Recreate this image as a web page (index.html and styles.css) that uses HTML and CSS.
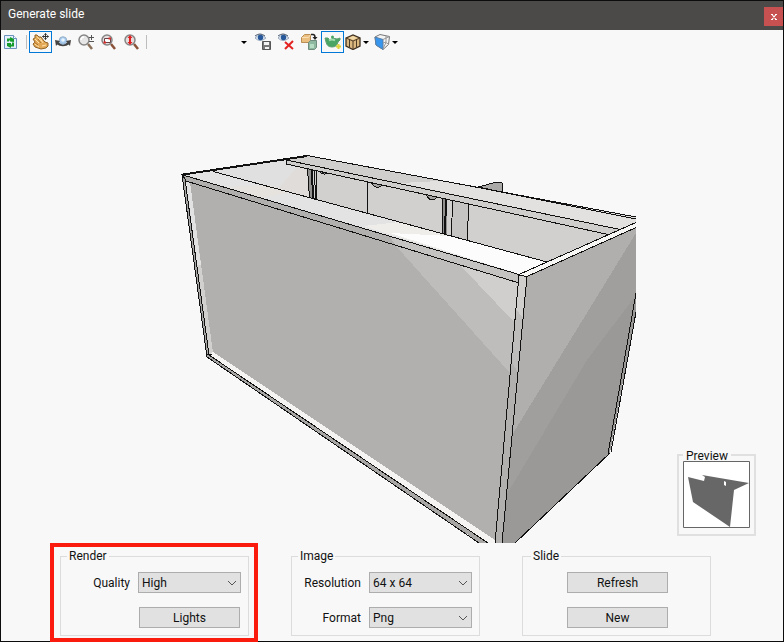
FILE: index.html
```html
<!DOCTYPE html>
<html lang="en">
<head>
  <meta charset="UTF-8">
  <title>Generate slide</title>
  <link rel="stylesheet" href="styles.css">
</head>
<body>

  <div class="window">
    <!-- Title bar -->
    <header class="titlebar">
      <span>Generate slide</span>
      <button class="close-btn" aria-label="Close">
        <svg width="6" height="6" viewBox="0 0 6 6"><path d="M1 0.5L5 5.5M5 0.5L1 5.5M0 0.5h2M4 0.5h2M0 5.5h2M4 5.5h2" stroke="#fff" stroke-width="1.2"/></svg>
      </button>
    </header>

    <!-- Toolbar -->
    <div class="toolbar">
      <button class="tool" aria-label="Refresh view">
        <svg width="14" height="16" viewBox="0 0 14 16">
          <path d="M0.500 1.500h9l3 3v10h-12z" fill="#e4f0fb" stroke="#6b93bd"/>
          <path d="M9.500 1.500v3h3" fill="#fff" stroke="#6b93bd"/>
          <path d="M4 7.500V5.500h3M9 8.500v3H6" fill="none" stroke="#159a2c" stroke-width="2"/>
          <path d="M6 3l4 2v3L6 7.500zM7 9l-4 0v3l4 2z" fill="#159a2c"/>
        </svg>
      </button>
      <span class="separator"></span>
      <button class="tool active" aria-label="Pan">
        <svg width="18" height="18" viewBox="0 0 18 18">
          <path d="M1 11L3 9 1 6 3 5 3 2 5 2 7 4 9 4 12 8 13 9 16 10 16 13 14 15 9 16 6 15 3 14z" fill="#e3a856" stroke="#8f6428"/>
          <path d="M3 6l4 4M5 3.500l4 5M8 5l3 5M3 11l4 3M10 13l4-1" stroke="#ffe2ae" fill="none"/>
          <path d="M2 9l4 3M6 6l3 4" stroke="#a8702a" fill="none"/>
          <path d="M13.500 0.500v6M10.500 3.500h6" stroke="#333" fill="none"/>
          <path d="M12 2l1.500-2L15 2zM12 5l1.500 2L15 5zM12 2l-2 1.500L12 5zM15 2l2 1.500L15 5z" fill="#333"/>
        </svg>
      </button>
      <button class="tool" aria-label="Orbit">
        <svg width="16" height="16" viewBox="0 0 16 16">
          <path d="M2 9q6 4 12 0" stroke="#444" stroke-width="2.500" fill="none"/>
          <circle cx="8" cy="6.500" r="3.800" fill="#a3c9ee" stroke="#9ab0c8"/>
          <circle cx="8" cy="6" r="1.800" fill="#e9f4fd"/>
          <path d="M0 6l5 1-4 5zM16 6l-5 1 4 5z" fill="#444"/>
        </svg>
      </button>
      <button class="tool" aria-label="Zoom in and out">
        <svg width="16" height="16" viewBox="0 0 16 16">
          <path d="M10 10l4 5" stroke="#8a7058" stroke-width="2.500"/>
          <circle cx="6" cy="6" r="5" fill="#e6e6e6" stroke="#858585" stroke-width="1.500"/>
          <path d="M3 6q0-3 3-3" stroke="#fff" stroke-width="1.500" fill="none"/>
          <path d="M11 3.500h5M13.500 1v5M11 7.500h5" stroke="#555"/>
        </svg>
      </button>
      <button class="tool" aria-label="Zoom window">
        <svg width="16" height="16" viewBox="0 0 16 16">
          <path d="M10 10l4 5" stroke="#8a5238" stroke-width="2.500"/>
          <circle cx="6" cy="6" r="5" fill="#e8e0e0" stroke="#858585" stroke-width="1.500"/>
          <path d="M3.500 4.500h6v4h-6z" fill="#fff" stroke="#6a4444"/>
          <path d="M2.500 8.500h2.500M7.500 4.500h2.500" stroke="#dd2a2a" stroke-width="2"/>
        </svg>
      </button>
      <button class="tool" aria-label="Zoom extents">
        <svg width="16" height="16" viewBox="0 0 16 16">
          <path d="M10 10l4 5" stroke="#8a5238" stroke-width="2.500"/>
          <circle cx="6" cy="6" r="5" fill="#e6dcdc" stroke="#858585" stroke-width="1.500"/>
          <path d="M6 3v6" stroke="#e02020" stroke-width="2"/>
          <path d="M3.500 4L6 1l2.500 3zM3.500 8L6 11l2.500-3z" fill="#e02020"/>
        </svg>
      </button>
      <span class="separator"></span>
      <button class="view-list" aria-label="Views">
        <svg width="6" height="3" viewBox="0 0 6 3"><path d="M0 0h6L3 3z" fill="#000"/></svg>
      </button>
      <button class="tool" aria-label="Save view">
        <svg width="18" height="18" viewBox="0 0 18 18">
          <path d="M0 5q5-6 11 0-6 5-11 0z" fill="#dce7f3" stroke="#9aa9bd"/>
          <circle cx="5.500" cy="4.500" r="2.700" fill="#27589a"/>
          <path d="M0 3q5-4 10 0" fill="none" stroke="#46566d"/>
          <path d="M7.500 8.500h8v8h-8z" fill="#777" stroke="#555"/>
          <path d="M9 9h5v3H9zM10 14h4v2h-4z" fill="#f2f2f2"/>
        </svg>
      </button>
      <button class="tool" aria-label="Delete view">
        <svg width="18" height="18" viewBox="0 0 18 18">
          <path d="M0 5q5-6 11 0-6 5-11 0z" fill="#dce7f3" stroke="#9aa9bd"/>
          <circle cx="5.500" cy="4.500" r="2.700" fill="#27589a"/>
          <path d="M0 3q5-4 10 0" fill="none" stroke="#46566d"/>
          <path d="M7 9l8 7M15 8l-8 8" stroke="#e32222" stroke-width="2"/>
        </svg>
      </button>
      <button class="tool" aria-label="Swap objects">
        <svg width="18" height="18" viewBox="0 0 18 18">
          <path d="M0.500 4.500l3-3h6v6l-2 2h-7z" fill="#eabf80" stroke="#b98d55"/>
          <path d="M1 4.500h6.500l2-3" fill="none" stroke="#f8dfb5"/>
          <path d="M7.500 9.500l2-2h6v7l-2 2h-6z" fill="#8fb8a0" stroke="#6f8c7c"/>
          <path d="M9 11h4v4H9z" fill="#b7dcc4"/>
          <path d="M10 1.500h2q2 0 2 3" fill="none" stroke="#222" stroke-width="1.500"/>
          <path d="M11.500 4h5L14 7z" fill="#222"/>
        </svg>
      </button>
      <button class="tool active" aria-label="Render">
        <svg width="18" height="18" viewBox="0 0 18 18">
          <path d="M1 5l3 0 2 2q3-3 7-1l3-1 0 2-2 2q-1 5-6 5-5 0-6-5z" fill="#48a563" stroke="#5f9f72"/>
          <path d="M5 7.500q3-2 6 0" stroke="#a5dcb2" stroke-width="2" fill="none"/>
          <circle cx="8.500" cy="4" r="1.500" fill="#48a563"/>
          <path d="M14.500 11v5M12 13.500h5" stroke="#dcd53c" stroke-width="2"/>
        </svg>
      </button>
      <button class="tool drop" aria-label="Materials">
        <svg width="16" height="16" viewBox="0 0 16 16">
          <path d="M1 4l7-3 7 3v8l-7 3.500L1 12z" fill="#dbb880" stroke="#3e3021" stroke-width="1.300"/>
          <path d="M4 4l4-2 4 2-4 2z" fill="#f1d8a6"/>
          <path d="M1 4l7 3 7-3M8 7v8M4.500 6v7M11.500 6v7" fill="none" stroke="#4e3b25"/>
        </svg>
        <svg width="6" height="3" viewBox="0 0 6 3"><path d="M0 0h6L3 3z" fill="#000"/></svg>
      </button>
      <button class="tool drop" aria-label="Visual style">
        <svg width="16" height="16" viewBox="0 0 16 16">
          <path d="M1 3L6 0.500l9.500 2-1 8-5.500 5L2 11z" fill="#f4f4f4" stroke="#777"/>
          <path d="M1 3l8 2.500v10L2 11z" fill="#3795ee" stroke="#5a7fa5"/>
          <path d="M9 5.500l6.500-3M9 14.500l3-6 3 2M12 8.500V2M9 9l3-1" fill="none" stroke="#999"/>
        </svg>
        <svg width="6" height="3" viewBox="0 0 6 3"><path d="M0 0h6L3 3z" fill="#000"/></svg>
      </button>
    </div>

    <!-- 3D view and slide preview -->
    <main class="viewport">
      <svg class="scene" width="456" height="389" viewBox="181 154 456 389" shape-rendering="crispEdges">
        <!-- handle behind the box -->
        <path d="M478 187L497 182l5 1v9z" fill="#aaa9a7" stroke="#111"/>
        <!-- inside walls -->
        <path d="M183 174L307 156 636 217V223L547 262 213 171z" fill="#d1d0ce"/>
        <path d="M213 171L286 160 308 168V197z" fill="#e0e0e0"/>
        <path d="M278 189L297 167 309 169V197z" fill="#dfdcd9"/>
        <path d="M452 201L468 204V240L452 236z" fill="#c5c4c2"/>
        <path d="M307 168l4 1 2 30-4-1zM442 199h5v35h-5z" fill="#92918f"/>
        <path d="M307.500 168l2 30M314.500 170l1 29M316.500 170v30M367.500 181v32M442.500 198v35M452.500 200l-1 36M468.500 203l-1 37" fill="none" stroke="#111"/>
        <path d="M312 169l1 30M446 199l-1 35" fill="none" stroke="#111" stroke-width="2"/>
        <path d="M319 171q4 5 8 2M371 182q5 9 11 3M425 193q6 12 13 3" fill="#a5a4a2" stroke="#111"/>
        <!-- back rail -->
        <path d="M286 160L307 156 636 217V222L620 229z" fill="#d0cfcd"/>
        <path d="M440 181L636 217V222L620 229 400 183z" fill="#e2e1e0"/>
        <path d="M286 160L620 229 608 234 286 164z" fill="#cfcecc"/>
        <path d="M307 155.500L636 217M466 185L636 219M286 160L620 229.500M286 164L608 234.500M286.500 160v4" fill="none" stroke="#111"/>
        <!-- front rail -->
        <path d="M183 175L213 171 547 262 519 274z" fill="#e3e3e3"/>
        <path d="M224 187L270 185 290 192 262 198z" fill="#e6e3df"/>
        <path d="M363 226L400 222 547 262 519 274z" fill="#efedea"/>
        <path d="M390 233L450 236 547 262 519 274z" fill="#fcfcfc"/>
        <path d="M183 175L519 274V283L186 181z" fill="#b1b0ae"/>
        <path d="M390 236L519 274V283L395 245z" fill="#c4c3c1"/>
        <!-- front face -->
        <path d="M186 181L519 283 495 543 208 356z" fill="#b1b0ae"/>
        <path d="M395 245L519 283 510 373z" fill="#bebdbb"/>
        <path d="M460 265L519 283 514 322z" fill="#d0cfcd"/>
        <path d="M186 181L190 182 213 353 208 356z" fill="#d1d0ce"/>
        <path d="M186 181L190 182 201 265H197z" fill="#e2e2e2"/>
        <path d="M213 352L495 540V543H488L209 355z" fill="#f5f4f3"/>
        <path d="M209 355L488 543H480L207 357z" fill="#a8a7a5"/>
        <path d="M182 175L185 178 209 355 207 357z" fill="#a8a7a5"/>
        <!-- corner post -->
        <path d="M519 275L527 276 502 543H495z" fill="#b1b0ae"/>
        <path d="M519 275L527 276 519 373 511 362z" fill="#bebdbb"/>
        <path d="M519 275L527 276 523 318 516 309z" fill="#d0cfcd"/>
        <!-- right side -->
        <path d="M527 276L636 228V310L610 453 515 543H502z" fill="#b0afad"/>
        <path d="M636 233V310L610 453 515 543H502L512 435z" fill="#a09f9d"/>
        <path d="M636 295V310L610 453 515 543H502L507 494 587 360z" fill="#9a9997"/>
        <path d="M519 274L636 222V228L527 276z" fill="#f7f7f6"/>
        <!-- edges -->
        <path d="M183 174.500L307 156" stroke="#111" stroke-width="2"/>
        <path d="M213 171.500L547 262M183 175L519 274.500M186 181L519 283M519 274.500L636 222.500M519 275L527 276.500 636 227.500" fill="none" stroke="#111"/>
        <path d="M182 175L207 357M185 179L209 355M181 174h5M182 174L186 181M209 355L488 543M207 357L479 543M207 354h5" fill="none" stroke="#111"/>
        <path d="M519 275L495 543M527 276L502 543M636 293L608 454M636 312L611 452M610 453L515 543" fill="none" stroke="#111"/>
      </svg>

      <fieldset class="preview">
        <legend>Preview</legend>
        <svg width="67" height="67" viewBox="0 0 67 67">
          <path d="M0.500 0.500h66v66h-66z" fill="#fff" stroke="#666"/>
          <path d="M5 16l16 4 1-4-3-2 47 8-15 7-4 37L10 41z" fill="#676767"/>
          <path d="M41 20l2 1v4l-2-1z" fill="#fff"/>
        </svg>
      </fieldset>
    </main>

    <!-- Options -->
    <form class="options">
      <div class="highlight">
        <fieldset class="group">
          <legend>Render</legend>
          <label for="quality">Quality</label>
          <div class="combo">
            <select id="quality">
              <option>Low</option>
              <option selected>High</option>
            </select>
            <svg width="10" height="6" viewBox="0 0 10 6"><path d="M1 1l4 4 4-4" fill="none" stroke="#555"/></svg>
          </div>
          <button type="button" class="btn second-col">Lights</button>
        </fieldset>
      </div>

      <fieldset class="group">
        <legend>Image</legend>
        <label for="resolution">Resolution</label>
        <div class="combo">
          <select id="resolution">
            <option>64 x 64</option>
          </select>
          <svg width="10" height="6" viewBox="0 0 10 6"><path d="M1 1l4 4 4-4" fill="none" stroke="#555"/></svg>
        </div>
        <label for="format">Format</label>
        <div class="combo">
          <select id="format">
            <option>Png</option>
          </select>
          <svg width="10" height="6" viewBox="0 0 10 6"><path d="M1 1l4 4 4-4" fill="none" stroke="#555"/></svg>
        </div>
      </fieldset>

      <fieldset class="group buttons">
        <legend>Slide</legend>
        <button type="button" class="btn">Refresh</button>
        <button type="button" class="btn">New</button>
      </fieldset>
    </form>
  </div>

</body>
</html>
```
FILE: styles.css
```css
/* Global Styles */
* {
  box-sizing: border-box;
}

body {
  margin: 0;
  font-family: Roboto, "Liberation Sans", sans-serif;
  font-size: 12px;
  line-height: 14px;
  color: #111;
}

button, select {
  font: inherit;
  color: inherit;
}

svg {
  display: block;
}

.window {
  display: flex;
  flex-direction: column;
  min-height: 100vh;
  border: 1px solid #0c0c0c;
  background-color: #f8f8f8;
}

/* Title bar */
.titlebar {
  display: flex;
  justify-content: space-between;
  height: 29px;
  padding-left: 7px;
  background-color: #4c4a48;
  line-height: 27px;
  color: #fff;
}

.close-btn {
  display: flex;
  justify-content: center;
  align-items: center;
  align-self: flex-end;
  width: 19px;
  height: 19px;
  margin-bottom: 4px;
  padding: 0;
  border: none;
  background-color: #c75050;
}

/* Toolbar */
.toolbar {
  display: flex;
  align-items: center;
  height: 24px;
}

.tool {
  display: flex;
  align-items: center;
  width: 23px;
  height: 22px;
  padding: 0 0 0 2px;
  border: 1px solid transparent;
  background: none;
}

.tool.active {
  border-color: #0078d7;
}

.tool.drop {
  width: 29px;
  padding: 0;
  gap: 2px;
}

.separator {
  width: 1px;
  height: 14px;
  margin: 0 2px;
  background-color: #bdbdbd;
}

.view-list {
  display: flex;
  justify-content: flex-end;
  align-items: center;
  width: 103px;
  height: 22px;
  padding: 0 5px;
  border: none;
  background: none;
}

/* 3D view */
.viewport {
  flex: 1;
  display: flex;
  align-items: flex-end;
  justify-content: space-between;
  padding: 0 27px 0 180px;
}

.preview {
  margin: 0 0 7px;
  padding: 0 4px 6px;
  border: 2px solid #e0e0e0;
}

.preview legend {
  height: 13px;
  padding: 0 3px;
  line-height: 17px;
}

/* Options */
.options {
  display: grid;
  grid-template-columns: repeat(3, 1fr);
  gap: 42px;
  padding: 6px 72px 5px 59px;
}

.group {
  display: grid;
  grid-template-columns: 1fr 103px;
  gap: 14px 8px;
  align-items: center;
  min-width: 0;
  margin: 0;
  padding: 9px 7px 7px;
  border: 1px solid #dcdcdc;
}

.group legend {
  margin-left: -1px;
  padding: 0 2px;
}

.group label {
  text-align: right;
}

.combo {
  position: relative;
}

.combo select {
  display: block;
  appearance: none;
  width: 100%;
  height: 21px;
  padding: 0 20px 0 3px;
  border: 1px solid #adadad;
  border-radius: 0;
  background-color: #e1e1e1;
}

.combo svg {
  position: absolute;
  top: 8px;
  right: 4px;
  pointer-events: none;
}

.btn {
  justify-self: center;
  width: 101px;
  height: 21px;
  padding: 0;
  border: 1px solid #adadad;
  background-color: #e1e1e1;
}

.second-col {
  grid-column: 2;
}

.group.buttons {
  grid-template-columns: 1fr;
  padding-left: 9px;
}

/* Red frame around the Render group */
.highlight {
  position: relative;
}

.highlight::after {
  content: "";
  position: absolute;
  inset: -6px -9px -6px -10px;
  border: 4px solid #fb1a0e;
  pointer-events: none;
}
```
